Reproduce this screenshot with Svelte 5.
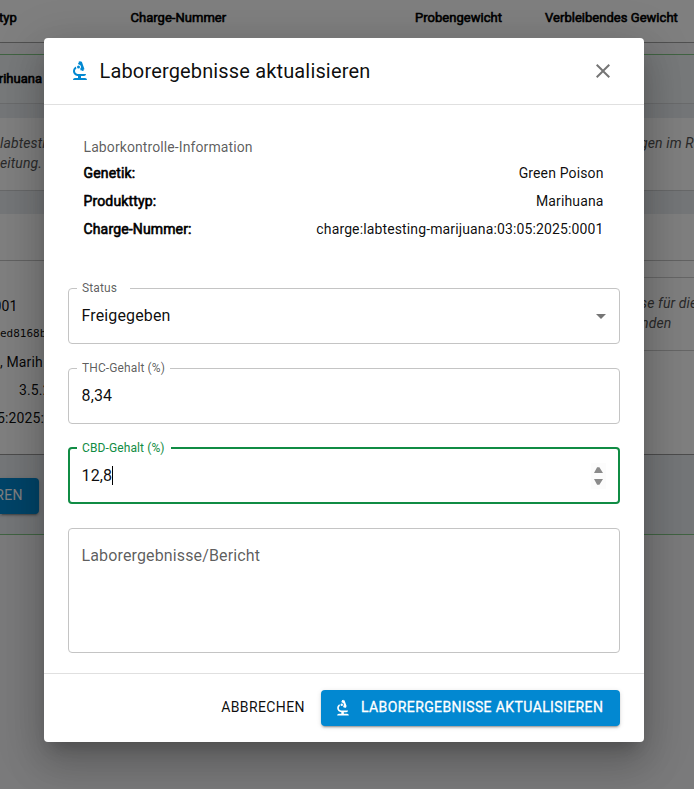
<script>
  const columns = [
    { label: 'Produkttyp', left: -46.5 },
    { label: 'Charge-Nummer', left: 130.5 },
    { label: 'Probengewicht', left: 415 },
    { label: 'Verbleibendes Gewicht', left: 545 }
  ];
  const info = [
    ['Genetik:', 'Green Poison'],
    ['Produkttyp:', 'Marihuana'],
    ['Charge-Nummer:', 'charge:labtesting-marijuana:03:05:2025:0001']
  ];
</script>

{#snippet biotech(size)}
  <svg class="icon" width={size} height={size} viewBox="0 0 24 24" fill="currentColor" aria-hidden="true">
    <path d="M7 19c-1.1 0-2 .9-2 2h14c0-1.1-.9-2-2-2h-4v-2h3c1.1 0 2-.9 2-2h-8c-1.66 0-3-1.34-3-3 0-1.09.59-2.04 1.46-2.56C8.17 9.03 8 8.54 8 8c0-.21.04-.42.09-.62C6.28 8.13 5 9.92 5 12c0 2.76 2.24 5 5 5v2H7z" />
    <path d="M10.56 5.51C11.91 5.54 13 6.64 13 8c0 .75-.33 1.41-.85 1.87l.59 1.62.94-.34.34.94 1.88-.68-.34-.94.94-.34-2.74-7.52-.94.34-.34-.94-1.88.68.34.94-.94.35.56 1.52z" />
    <circle cx="10.5" cy="8" r="1.5" />
  </svg>
{/snippet}

<div class="screen">
  <div class="page" aria-hidden="true">
    <div class="thead">
      {#each columns as c}
        <b class="th" style="left: {c.left}px">{c.label}</b>
      {/each}
    </div>
    <div class="accordion">
      <div class="summary"><b class="product">Marihuana</b></div>
      <div class="details">
        <div class="paper note">
          <div class="col-left"><div>labtesti</div><div>eitung.</div></div>
          <div class="col-right"><div>gen im R</div></div>
        </div>
        <div class="paper main">
          <div class="main-head"></div>
          <div class="main-body">
            <div class="values">
              <div class="r1">0001</div>
              <div class="mono">ed8168b</div>
              <div class="r3">, Marih</div>
              <div class="r4">3.5.2</div>
              <div class="r5">5:2025:0</div>
            </div>
            <div class="results">
              <div class="results-text"><div>se für die</div><div class="nden">nden</div></div>
            </div>
          </div>
        </div>
        <div class="back-btn">AKTUALISIEREN</div>
      </div>
    </div>
  </div>

  <div class="backdrop">
    <div class="dialog" role="dialog" aria-labelledby="dlg-title">
      <header>
        <span class="blue">{@render biotech(24)}</span>
        <h2 id="dlg-title">Laborergebnisse aktualisieren</h2>
        <button class="close" aria-label="Schließen">
          <svg class="icon" width="24" height="24" viewBox="0 0 24 24" fill="currentColor"><path d="M19 6.41 17.59 5 12 10.59 6.41 5 5 6.41 10.59 12 5 17.59 6.41 19 12 13.41 17.59 19 19 17.59 13.41 12z" /></svg>
        </button>
      </header>

      <div class="content">
        <section class="info">
          <div class="info-title">Laborkontrolle-Information</div>
          {#each info as [k, v]}
            <div class="info-row"><b>{k}</b><span>{v}</span></div>
          {/each}
        </section>

        <div class="field">
          <span class="label status">Status</span>
          <span class="value">Freigegeben</span>
          <svg class="icon arrow" width="24" height="24" viewBox="0 0 24 24" fill="currentColor"><path d="M7 10l5 5 5-5z" /></svg>
        </div>
        <div class="field">
          <span class="label">THC-Gehalt (%)</span>
          <span class="value">8,34</span>
        </div>
        <div class="field focused">
          <span class="label">CBD-Gehalt (%)</span>
          <span class="value">12,8</span><i class="caret"></i>
          <span class="spinner">
            <svg width="15" height="26" viewBox="0 0 15 26" fill="#8b8b8b"><path d="M6.1 4.2h2.3L12 10H3zM3 16h9l-3.6 5.8H6.1z" /></svg>
          </span>
        </div>
        <div class="field area">
          <span class="placeholder">Laborergebnisse/Bericht</span>
        </div>
      </div>

      <footer>
        <button class="btn text">Abbrechen</button>
        <button class="btn solid">{@render biotech(20)}<span>Laborergebnisse aktualisieren</span></button>
      </footer>
    </div>
  </div>
</div>

<style>
  :global(body) { margin: 0; overflow: hidden; }
  .screen, .screen * { box-sizing: border-box; }
  .screen {
    position: relative;
    width: 694px;
    height: 789px;
    overflow: hidden;
    font: 400 14px/20px Roboto, sans-serif;
    letter-spacing: 0.13px;
    color: rgba(0, 0, 0, 0.95);
  }
  .icon { display: block; flex: none; }
  b { font-weight: 400; -webkit-text-stroke: 0.6px currentColor; color: #000; letter-spacing: 0.15px; }

  .page { height: 789px; background: #f4f5f7; white-space: nowrap; }
  .thead { position: relative; height: 43px; background: #fff; border-bottom: 1px solid #a0a0a0; }
  .th { position: absolute; top: 8px; font-size: 13px; letter-spacing: 0.03px; }
  .accordion {
    margin-top: 11px;
    height: 481px;
    border-top: 1px solid #81c784;
    border-bottom: 1px solid #81c784;
    background: #f2f3f5;
  }
  .summary { height: 49px; border-bottom: 1px solid #d4d6d8; background: #eef2f5; padding-top: 14px; }
  .product { display: block; width: 42px; direction: rtl; font-size: 13px; letter-spacing: 0; }
  .details { padding-top: 14px; height: 430px; background: #e8edf1; }
  .paper { background: #fff; border-bottom: 1px solid #cfd1d3; }
  .note { height: 73px; display: flex; justify-content: space-between; padding-top: 15px; font-style: italic; color: #555; }
  .col-left { width: 46px; }
  .col-right { width: 54px; }
  .main { height: 241px; margin-top: 23px; border-bottom-color: #999; }
  .main-head { height: 47px; border-bottom: 1px solid #c4c4c4; }
  .main-body { display: flex; justify-content: space-between; }
  .values { width: 46px; padding-top: 31px; line-height: 28px; }
  .r1 { display: flex; justify-content: flex-end; width: 17.5px; }
  .mono { font: 11px/28px "DejaVu Sans Mono", monospace; letter-spacing: 0; }
  .r4 { padding-left: 19px; }
  .r5 { margin-left: -3px; }
  .results { width: 80px; padding-top: 16px; }
  .results-text { height: 74px; border-top: 1px solid #ccc; border-bottom: 1px solid #ccc; padding: 15px 0 0 26px; font-style: italic; color: #555; }
  .nden { padding-left: 1px; }
  .back-btn {
    display: flex; justify-content: flex-end; align-items: center;
    width: 39px; height: 36px; margin-top: 23px; padding: 0 16px 2px 0;
    border-radius: 0 4px 4px 0;
    background: #0288d1; color: #fff;
    letter-spacing: 0.4px;
    box-shadow: 0 3px 1px -2px rgba(0,0,0,.2), 0 2px 2px rgba(0,0,0,.14), 0 1px 5px rgba(0,0,0,.12);
  }

  .backdrop {
    position: absolute; inset: 0;
    display: flex; justify-content: center; align-items: flex-start;
    padding: 38px 6px 0 0;
    background: rgba(0, 0, 0, 0.5);
  }
  .dialog {
    width: 600px; height: 704px;
    display: flex; flex-direction: column;
    border-radius: 4px; background: #fff;
    box-shadow: 0 11px 15px -7px rgba(0,0,0,.2), 0 24px 38px 3px rgba(0,0,0,.14), 0 9px 46px 8px rgba(0,0,0,.12);
  }
  header { display: flex; align-items: center; height: 67px; padding: 0 29px 0 24px; border-bottom: 1px solid #e0e0e0; }
  .blue { color: #0288d1; }
  h2 { margin: 0 auto 0 7.5px; font-size: 20px; font-weight: 400; line-height: 32px; letter-spacing: 0.15px; }
  button { border: 0; background: none; padding: 0; font: inherit; color: inherit; }
  .close { color: rgba(0, 0, 0, 0.54); }
  .content { flex: 1; padding: 32px 24px 0; }
  .info { height: 151px; padding: 0 16.5px 0 15.5px; }
  .info-title { height: 22px; line-height: 20px; letter-spacing: 0.1px; color: rgba(0,0,0,.65); }
  .info-row { display: flex; justify-content: space-between; height: 28px; line-height: 28px; }
  .field {
    position: relative;
    display: flex; align-items: center;
    height: 56px; margin-bottom: 24px; padding: 0 6px 0 12.5px;
    border: 1px solid #c4c4c4; border-radius: 4px;
    font-size: 16px;
    letter-spacing: 0.14px;
  }
  .label {
    position: absolute; top: -11px; left: 8px;
    padding: 0 5px; background: #fff;
    font-size: 12px; line-height: 20px; letter-spacing: 0.11px;
    color: rgba(0, 0, 0, 0.65);
  }
  .status { padding-right: 13px; }
  .arrow { margin-left: auto; color: rgba(0,0,0,.54); }
  .focused { height: 57px; margin-top: -25px; border: 2px solid #108c44; padding: 0 12px 0 11.5px; }
  .field + .focused { margin-top: -1px; }
  .field:has(+ .focused) { margin-bottom: 24px; }
  .focused .label { top: -11px; left: 7px; padding-right: 6px; color: #108c44; }
  .caret { width: 1px; height: 19px; background: #000; }
  .spinner { margin-left: auto; display: flex; background: #fcfcfc; }
  .area { height: 125px; margin: 0; align-items: flex-start; padding-top: 17px; }
  .placeholder { color: rgba(0,0,0,.65); }
  footer { display: flex; justify-content: flex-end; align-items: flex-start; gap: 8px; height: 69px; padding: 16px 24px 0; border-top: 1px solid #e0e0e0; }
  .btn { display: flex; align-items: center; height: 36px; border-radius: 4px; letter-spacing: 0.4px; text-transform: uppercase; white-space: nowrap; }
  .text { padding: 0 8px 2px; }
  .solid {
    width: 299px; padding: 0 12px; gap: 8px; background: #0288d1; color: #fff;
    box-shadow: 0 3px 1px -2px rgba(0,0,0,.2), 0 2px 2px rgba(0,0,0,.14), 0 1px 5px rgba(0,0,0,.12);
  }
  .solid span { padding-bottom: 2px; -webkit-text-stroke: 0.3px currentColor; }
</style>
